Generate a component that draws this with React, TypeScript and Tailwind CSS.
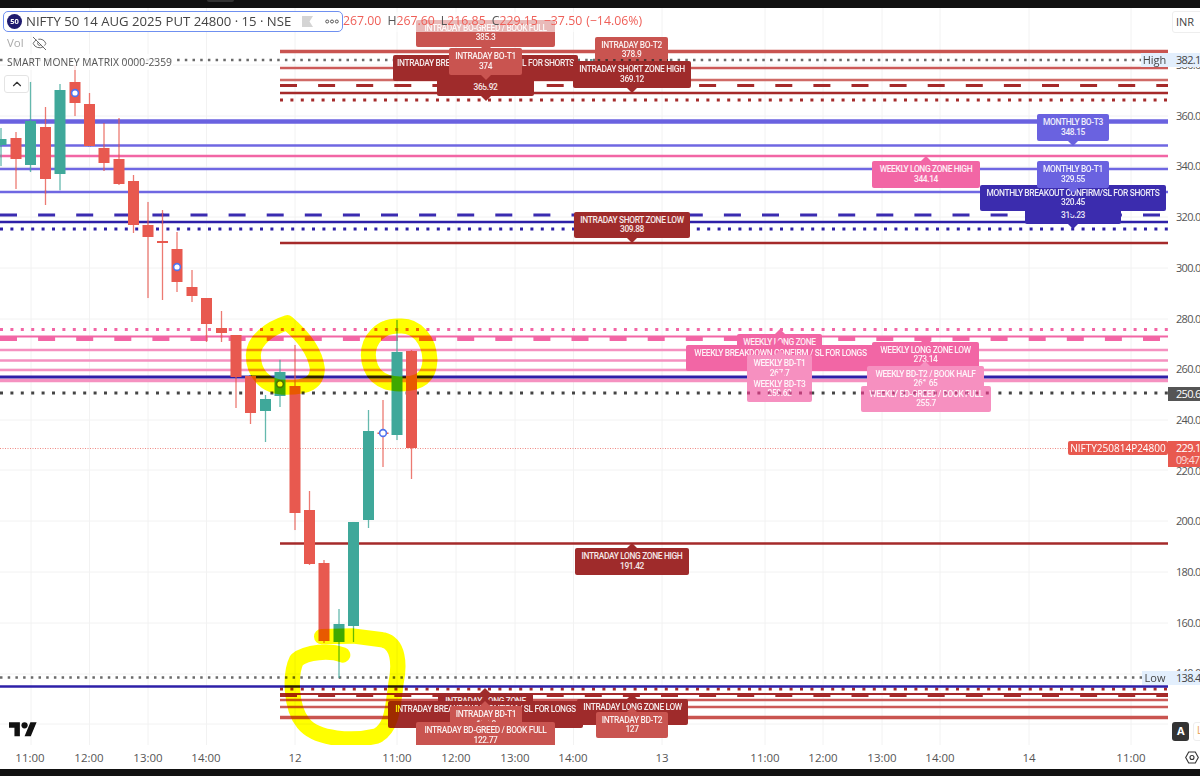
import { ChevronUp, EyeOff } from "lucide-react";

type C = "dark" | "mid" | "pink" | "lpink" | "violet" | "navy";
type Label = { lines: string[]; x: number; y: number; w: number; h: number; c: C; pin?: "up" | "down"; px?: number };

const bg: Record<C, string> = {
  dark: "bg-[#9f2b2b]",
  mid: "bg-[#c95450]",
  pink: "bg-[#f266a5]",
  lpink: "bg-[#f690c0]",
  violet: "bg-[#6a62e0]",
  navy: "bg-[#3b2cae]",
};
const pinUp: Record<C, string> = {
  dark: "border-b-[#9f2b2b]",
  mid: "border-b-[#c95450]",
  pink: "border-b-[#f266a5]",
  lpink: "border-b-[#f690c0]",
  violet: "border-b-[#6a62e0]",
  navy: "border-b-[#3b2cae]",
};
const pinDown: Record<C, string> = {
  dark: "border-t-[#9f2b2b]",
  mid: "border-t-[#c95450]",
  pink: "border-t-[#f266a5]",
  lpink: "border-t-[#f690c0]",
  violet: "border-t-[#6a62e0]",
  navy: "border-t-[#3b2cae]",
};

const labels: Label[] = [
  { lines: ["INTRADAY SHORT ZONE", "365.92"], x: 437, y: 70, w: 97, h: 26, c: "dark", pin: "down" },
  { lines: ["INTRADAY BO-GREED / BOOK FULL", "385.3"], x: 416, y: 20, w: 139, h: 26.5, c: "mid", pin: "down" },
  { lines: ["INTRADAY BREAKOUT CONFIRM / SL FOR SHORTS", "371.5"], x: 393, y: 55, w: 185, h: 26, c: "dark", pin: "down" },
  { lines: ["INTRADAY BO-T1", "374"], x: 449, y: 48, w: 73, h: 27, c: "mid", pin: "down" },
  { lines: ["INTRADAY BO-T2", "378.9"], x: 595, y: 37, w: 73, h: 26, c: "mid", pin: "down" },
  { lines: ["INTRADAY SHORT ZONE HIGH", "369.12"], x: 573, y: 61, w: 118, h: 27, c: "dark", pin: "down" },
  { lines: ["INTRADAY SHORT ZONE LOW", "309.88"], x: 574, y: 212, w: 116, h: 26, c: "dark", pin: "down" },
  { lines: ["WEEKLY LONG ZONE HIGH", "344.14"], x: 872, y: 161, w: 108, h: 27, c: "pink", pin: "up" },
  { lines: ["MONTHLY BO-T3", "348.15"], x: 1037, y: 114, w: 72, h: 27, c: "violet", pin: "down" },
  { lines: ["MONTHLY SHORT ZONE", "315.23"], x: 1025, y: 198, w: 96, h: 26, c: "navy", pin: "down" },
  { lines: ["MONTHLY BREAKOUT CONFIRM/SL FOR SHORTS", "320.45"], x: 980, y: 185, w: 186, h: 26, c: "navy", pin: "down" },
  { lines: ["MONTHLY BO-T1", "329.55"], x: 1037, y: 161, w: 72, h: 27, c: "violet", pin: "down" },
  { lines: ["WEEKLY LONG ZONE", "278.5"], x: 737, y: 334, w: 85, h: 26, c: "pink", pin: "up" },
  { lines: ["WEEKLY BREAKDOWN CONFIRM / SL FOR LONGS", "270.4"], x: 686, y: 345, w: 189, h: 26, c: "pink", pin: "up", px: 779 },
  { lines: ["WEEKLY LONG ZONE LOW", "273.14"], x: 872, y: 342, w: 107, h: 26, c: "pink", pin: "up" },
  { lines: ["WEEKLY BD-T1", "267.7"], x: 747, y: 355, w: 65, h: 27, c: "lpink", pin: "up" },
  { lines: ["WEEKLY BD-T3", "259.62"], x: 747, y: 376, w: 65, h: 26, c: "lpink", pin: "up" },
  { lines: ["WEEKLY BD-T2 / BOOK HALF", "261.65"], x: 867, y: 366, w: 117, h: 26, c: "lpink", pin: "up", px: 925 },
  { lines: ["WEEKLY BD-GREED / BOOK FULL", "255.7"], x: 861, y: 386, w: 130, h: 26, c: "lpink", pin: "up", px: 925 },
  { lines: ["INTRADAY LONG ZONE HIGH", "191.42"], x: 575, y: 548, w: 114, h: 27, c: "dark", pin: "up" },
  { lines: ["INTRADAY LONG ZONE", "140.2"], x: 438, y: 693, w: 95, h: 26, c: "dark", pin: "up", px: 485 },
  { lines: ["INTRADAY BREAKDOWN CONFIRM / SL FOR LONGS", "133.6"], x: 388, y: 701, w: 195, h: 27, c: "dark", pin: "up", px: 485 },
  { lines: ["INTRADAY LONG ZONE LOW", "131.1"], x: 577, y: 699, w: 111, h: 26, c: "dark", pin: "up", px: 632 },
  { lines: ["INTRADAY BD-T1", "128.8"], x: 450, y: 706, w: 72, h: 27, c: "mid", pin: "up", px: 485 },
  { lines: ["INTRADAY BD-T2", "127"], x: 596, y: 712, w: 72, h: 26, c: "mid", pin: "up", px: 632 },
  { lines: ["INTRADAY BD-GREED / BOOK FULL", "122.77"], x: 416, y: 722, w: 139, h: 27, c: "mid", pin: "up", px: 485 },
];

type Candle = [number, number, number, number, number, "r" | "g"];
const candles: Candle[] = [
  [1, 139, 145, 128, 166, "g"],
  [16, 138, 159, 132, 189, "r"],
  [30.5, 121, 165, 82, 172, "g"],
  [45.5, 127, 179, 107, 205, "r"],
  [60, 90, 174, 84, 190, "g"],
  [75, 82, 103, 65, 116, "r"],
  [89.5, 104, 146, 93, 146, "r"],
  [104, 148, 163, 123, 171, "r"],
  [119, 159, 184, 118, 185, "r"],
  [133.5, 181, 225, 175, 233, "r"],
  [148, 225, 237, 202, 298, "r"],
  [162.5, 241, 243, 210, 300, "r"],
  [177, 249, 282, 232, 292, "r"],
  [192, 287, 296, 270, 302, "r"],
  [206.5, 298, 324, 298, 342, "r"],
  [221.5, 328, 333, 311, 342, "r"],
  [236, 335, 377, 335, 408, "r"],
  [250.5, 376, 413, 376, 424, "r"],
  [265.5, 399, 411, 395, 442, "g"],
  [280, 372, 396, 360, 407, "g"],
  [295, 386, 513, 345, 530, "r"],
  [309.5, 510, 564, 491, 565, "r"],
  [324, 563, 641, 560, 643, "r"],
  [339, 624, 642, 609, 678, "g"],
  [353.5, 522, 626, 522, 642, "g"],
  [368.5, 431, 520, 410, 528, "g"],
  [383, 432.5, 434, 400, 467, "r"],
  [397, 352, 435, 320, 440, "g"],
  [411.5, 351, 448, 350, 479, "r"],
];

const vGrid = [31, 89.5, 148, 206.5, 295, 397, 456, 515, 573.5, 662, 765, 823, 882, 940, 1029, 1131];
const hGrid = [65, 116, 167, 217, 268, 319, 369, 420, 470, 521, 572, 623, 674, 724];

const times: [number, string][] = [
  [30, "11:00"], [89, "12:00"], [148, "13:00"], [206, "14:00"], [295, "12"], [397, "11:00"],
  [456, "12:00"], [515, "13:00"], [573, "14:00"], [662, "13"], [765, "11:00"], [823, "12:00"],
  [882, "13:00"], [940, "14:00"], [1029, "14"], [1131, "11:00"],
];
const prices: [number, string][] = [
  [65, "380.0"], [116, "360.0"], [166, "340.0"], [217, "320.0"], [268, "300.0"], [319, "280.0"],
  [369, "260.0"], [420, "240.0"], [471, "220.0"], [521, "200.0"], [572, "180.0"], [623, "160.0"], [673, "140.0"],
];

type L = [number, number, number, number, string, string?];
const lines: L[] = [
  [280, 1168, 51.5, 3.5, "#c95450"],
  [280, 1168, 68, 2.6, "#cc5a58"],
  [280, 1168, 80, 2.6, "#d06a66"],
  [280, 1168, 85.5, 3, "#a52a2a", "17 21.1"],
  [280, 1168, 93, 2.6, "#a52a2a"],
  [280, 1168, 100, 3, "#a52a2a", "3 7.4"],
  [0, 1168, 121.5, 4.5, "#6a62e0"],
  [0, 1168, 145.5, 2.6, "#6f67e2"],
  [0, 1168, 156, 2.6, "#f266a5"],
  [0, 1168, 169, 2.6, "#6f67e2"],
  [0, 1168, 192, 2.6, "#6f67e2"],
  [0, 1168, 215, 3, "#3a2bb0", "17 21.1"],
  [0, 1168, 222, 2.6, "#2e20a8"],
  [0, 1168, 229, 3, "#2e20a8", "3 7.4"],
  [280, 1168, 243, 2.6, "#a52a2a"],
  [0, 1168, 329.5, 3, "#f266a5", "3 7.4"],
  [0, 1168, 336.5, 2, "#f266a5"],
  [0, 1168, 339, 4, "#f266a5", "17 21.1"],
  [0, 1168, 350, 2.6, "#f591c0"],
  [0, 1168, 360.5, 2.6, "#f591c0"],
  [0, 1168, 370, 2.6, "#f591c0"],
  [0, 1168, 380.5, 3.5, "#f591c0"],
  [0, 1168, 377, 2.8, "#2e20a8"],
  [0, 1168, 393, 3, "#444444", "3 7.4"],
  [0, 1168, 448.5, 1, "#f08a84", "1 1.5"],
  [280, 1168, 543.5, 2.6, "#a52a2a"],
  [0, 1168, 60, 2.4, "#6a6a6a", "2.5 5.2"],
  [0, 1168, 677.5, 2.4, "#6a6a6a", "2.5 5.2"],
  [280, 1168, 689, 3, "#a52a2a", "3 7.4"],
  [0, 1168, 686.5, 2.6, "#2e20a8"],
  [280, 1168, 694, 2, "#a52a2a"],
  [280, 1168, 695.5, 3, "#a52a2a", "17 21.1"],
  [280, 1168, 700, 2.4, "#cc5a58"],
  [280, 1168, 707, 2.4, "#cc5a58"],
  [280, 1168, 717.5, 3.5, "#c95450"],
];

const markers = [[75, 93], [177, 267], [280, 384], [383, 433]];

function Chart() {
  return (
    <svg className="absolute inset-0 h-full w-full" viewBox="0 8 1168 737">
      {vGrid.map((x) => (
        <line key={x} x1={x} x2={x} y1={8} y2={745} stroke="#f2f2f2" />
      ))}
      {hGrid.map((y) => (
        <line key={y} x1={0} x2={1168} y1={y} y2={y} stroke="#f2f2f2" />
      ))}
      {lines.map(([a, b, y, w, c, d], i) => (
        <line key={i} x1={a} x2={b} y1={y} y2={y} stroke={c} strokeWidth={w} strokeDasharray={d} />
      ))}
      {candles.map(([x, t, b, wt, wb, k]) => {
        const col = k === "r" ? "#e8594f" : "#3fa89a";
        return (
          <g key={x}>
            <line x1={x} x2={x} y1={wt} y2={wb} stroke={col} strokeWidth={1.3} opacity={0.8} />
            <rect x={x - 5.5} y={t} width={11} height={b - t} fill={col} />
          </g>
        );
      })}
      {markers.map(([x, y]) => (
        <circle key={x} cx={x} cy={y} r={3.4} fill="#fff" stroke="#4f73ee" strokeWidth={1.6} />
      ))}
    </svg>
  );
}

function Overlay() {
  return (
    <svg className="absolute inset-0 h-full w-full mix-blend-multiply" viewBox="0 8 1168 737" fill="none">
      <line x1={590} x2={668} y1={60} y2={60} stroke="#5d9c9c" strokeWidth={2} strokeDasharray="2.5 5.2" />
      <line x1={747} x2={812} y1={393} y2={393} stroke="#c070a0" strokeWidth={3} strokeDasharray="3 7.4" />
      <line x1={861} x2={991} y1={393} y2={393} stroke="#c070a0" strokeWidth={3} strokeDasharray="3 7.4" />
      <g transform="translate(200 300) scale(0.3333)" stroke="#ffff00" strokeLinecap="round" strokeLinejoin="round" strokeWidth={45}>
        <path d="M262 68C210 85 160 120 160 165C160 215 190 262 260 262C320 262 352 250 352 205C345 150 300 100 262 68Z" />
        <path d="M600 78C540 75 505 120 505 165C507 220 540 252 600 252C650 252 688 240 690 180C688 120 650 75 600 78Z" />
      </g>
      <g transform="translate(270 600) scale(0.3333)" stroke="#ffff00" strokeLinecap="round" strokeLinejoin="round" strokeWidth={46}>
        <path d="M155 110L250 108L340 120C385 132 390 190 378 250C368 330 365 385 320 408C250 425 140 420 100 370C60 320 60 220 80 180C110 155 180 150 218 165" />
      </g>
    </svg>
  );
}

function ChartLabel({ l }: { l: Label }) {
  const px = (l.px ?? l.x + l.w / 2) - l.x;
  return (
    <div
      className={`absolute flex flex-col items-center justify-center rounded-[2px] text-center font-['Roboto',sans-serif] font-medium leading-[9.5px] tracking-[-0.35px] whitespace-nowrap text-white/90 text-[8.4px] ${bg[l.c]}`}
      style={{ left: l.x, top: l.y - 8, width: l.w, height: l.h }}
    >
      {l.lines.map((t) => (
        <span key={t}>{t}</span>
      ))}
      {l.pin === "up" && (
        <span
          className={`absolute -top-[5px] -ml-[5px] h-0 w-0 border-x-[5px] border-b-[5px] border-x-transparent ${pinUp[l.c]}`}
          style={{ left: px }}
        />
      )}
      {l.pin === "down" && (
        <span
          className={`absolute -bottom-[5px] -ml-[5px] h-0 w-0 border-x-[5px] border-t-[5px] border-x-transparent ${pinDown[l.c]}`}
          style={{ left: px }}
        />
      )}
    </div>
  );
}

function Legend() {
  return (
    <div className="absolute left-[3px] top-[3px] flex flex-col items-start">
      <div className="flex h-[21px] items-center">
        <div className="flex h-[21px] w-[340px] items-center rounded-[5px] border-[1.5px] border-[#6f90f0] bg-white pl-[3px] text-[13.15px] text-[#444]">
          <span className="flex h-[15px] w-[15px] shrink-0 items-center justify-center rounded-full bg-[#1f1b6e] text-[7.5px] font-bold text-white">50</span>
          <span className="ml-[4px] whitespace-nowrap">NIFTY 50 14 AUG 2025 PUT 24800 · 15 · NSE</span>
          <svg className="ml-[11px] shrink-0" width="11" height="11" viewBox="0 0 11 11">
            <path d="M0 0H11L7.5 5.5L11 11H0Z" fill="#d4d4d4" />
          </svg>
          <svg className="ml-[12px] shrink-0" width="14" height="5" viewBox="0 0 14 5" fill="none" stroke="#555" strokeWidth="1">
            <circle cx="2.2" cy="2.5" r="1.5" />
            <circle cx="7" cy="2.5" r="1.5" />
            <circle cx="11.8" cy="2.5" r="1.5" />
          </svg>
        </div>
        <div className="flex h-[20px] items-center whitespace-nowrap bg-white/60 text-[12.3px] text-[#ef5f58]">
          <span>267.00</span>
          <span className="ml-[6px] text-[#555]">H</span>
          <span>267.60</span>
          <span className="ml-[6px] text-[#555]">L</span>
          <span>216.85</span>
          <span className="ml-[6px] text-[#555]">C</span>
          <span>229.15</span>
          <span className="ml-[6px]">−37.50</span>
          <span className="ml-[4px]">(−14.06%)</span>
        </div>
      </div>
      <div className="mt-[2px] ml-[4px] flex h-[18px] items-center text-[11.5px] text-[#aaa]">
        Vol
        <EyeOff className="ml-[8px] text-[#555]" size={15} strokeWidth={1.4} />
      </div>
      <div className="mt-[2px] ml-[3px] whitespace-nowrap bg-white/80 px-[1px] text-[10.3px] leading-[16px] text-[#555]">SMART MONEY MATRIX 0000-2359</div>
      <div className="mt-[5px] ml-[1px] flex h-[18px] w-[25px] items-center justify-center rounded-[3px] border border-[#e4e4e4] bg-white">
        <ChevronUp className="text-[#333]" size={14} strokeWidth={2} />
      </div>
    </div>
  );
}

function PriceAxis() {
  return (
    <div className="relative w-[32px] overflow-hidden text-[11px] tracking-[-0.7px] text-[#555]">
      {prices.map(([y, p]) => (
        <span key={p} className="absolute left-[8px] -translate-y-1/2" style={{ top: y - 8 }}>{p}</span>
      ))}
      <div className="absolute left-[4px] top-[3px] flex h-[22px] w-[40px] items-center rounded-[3px] border border-[#eee] bg-white pl-[3px] text-[#444] tracking-normal">INR</div>
      <div className="absolute left-0 top-[45px] flex h-[14px] w-full items-center bg-[#e3effd] pl-[8px] text-[#444]">382.1</div>
      <div className="absolute left-0 top-[379px] flex h-[14px] w-full items-center bg-[#555] pl-[8px] text-white">250.6</div>
      <div className="absolute left-0 top-[433px] flex h-[26px] w-full flex-col justify-center bg-[#e8594f] pl-[8px] leading-[12px] text-white">
        <span>229.1</span>
        <span className="text-[10.5px] text-white/80">09:47</span>
      </div>
      <div className="absolute left-0 top-[663px] flex h-[14px] w-full items-center bg-[#e3effd] pl-[8px] text-[#444]">138.4</div>
      <div className="absolute left-[4px] top-[714px] flex h-[19px] w-[17px] items-center justify-center rounded-[3px] bg-[#333] text-[11px] font-bold text-white">A</div>
      <div className="absolute left-[25px] top-[714px] flex h-[19px] w-[17px] rounded-[3px] border border-[#eee] pl-[3px] text-[10px] text-[#e8a050]">L</div>
    </div>
  );
}

function TimeAxis() {
  return (
    <div className="relative h-[24px] shrink-0 text-[11.5px] text-[#555]">
      {times.map(([x, t]) => (
        <span key={x} className="absolute top-[4px] -translate-x-1/2" style={{ left: x }}>{t}</span>
      ))}
      <svg className="absolute left-[1185px] top-[6px]" width="14" height="13" viewBox="0 0 14 13" fill="none" stroke="#333" strokeWidth="1.1">
        <path d="M3.7 1H10.3L13.3 6.5L10.3 12H3.7L0.7 6.5Z" />
        <circle cx="7" cy="6.5" r="2" />
      </svg>
    </div>
  );
}

export default function App() {
  return (
    <div className="flex h-[776px] w-[1200px] flex-col overflow-hidden bg-white font-['Open_Sans','Noto_Sans',sans-serif]">
      <div className="relative h-[8px] shrink-0 bg-[#111]">
        <div className="absolute left-[207px] top-0 h-[2px] w-[27px] rounded-b bg-[#333]" />
      </div>
      <div className="flex min-h-0 flex-1">
        <div className="relative isolate flex-1 overflow-hidden">
          <Chart />
          {labels.map((l) => (
            <ChartLabel key={l.lines[0]} l={l} />
          ))}
          <Overlay />
          <Legend />
          <div className="absolute right-0 top-[45px] flex h-[14px] w-[27px] items-center justify-center bg-[#e3effd] text-[11px] text-[#444]">High</div>
          <div className="absolute right-0 top-[663px] flex h-[14px] w-[26px] items-center justify-center bg-[#e3effd] text-[11px] text-[#444]">Low</div>
          <div className="absolute right-0 top-[433px] flex h-[14px] w-[100px] items-center justify-center rounded-[2px] bg-[#e8594f] text-[10px] text-white">NIFTY250814P24800</div>
          <svg className="absolute left-[9px] top-[711px]" width="28" height="22" viewBox="0 0 36 28" fill="#111">
            <path d="M14 22H7V11H0V4h14v18zM28 22h-8l7.5-18h8L28 22z" />
            <circle cx="20" cy="8" r="4" />
          </svg>
        </div>
        <PriceAxis />
      </div>
      <TimeAxis />
      <div className="h-[7px] shrink-0 bg-[#111]" />
    </div>
  );
}
